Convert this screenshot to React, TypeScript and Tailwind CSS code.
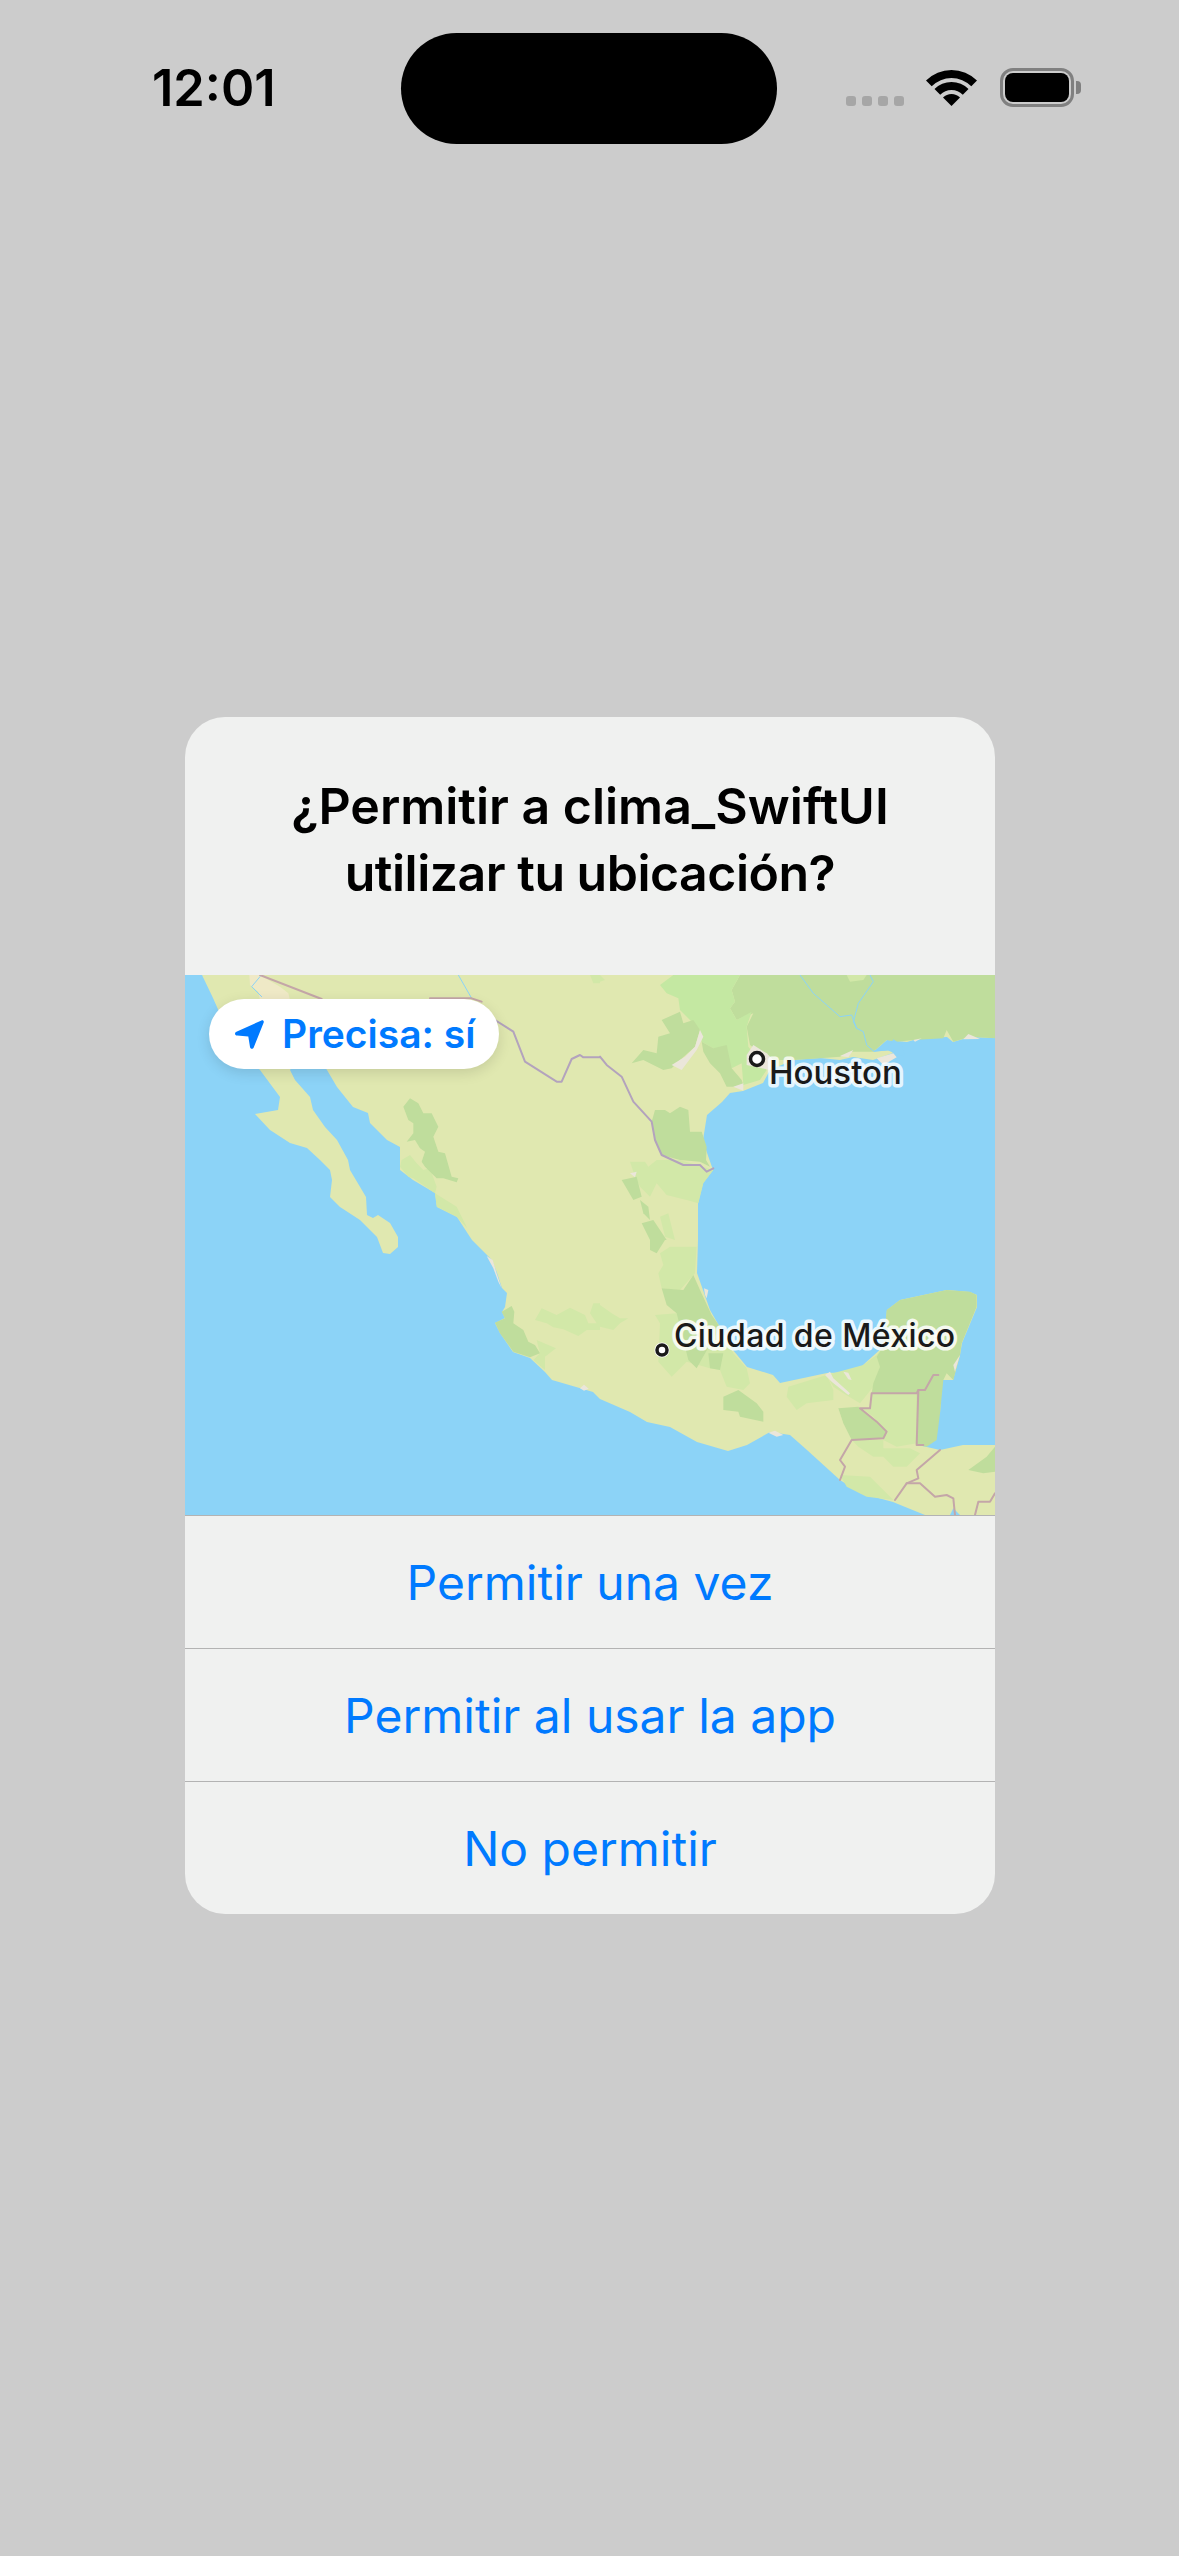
const F = { fontFamily: "Inter, 'Liberation Sans', sans-serif" };

const LAND =
  "17,0 28,23 40,50 60,80 75,95 95,122 93,135 70,139 85,155 105,168 122,173 135,185 145,195 147,205 145,222 155,232 175,245 192,262 198,278 205,279 213,272 213,262 205,248 193,240 188,243 182,240 181,222 165,195 163,185 152,165 140,152 128,135 125,122 110,105 105,95 115,80 135,85 142,95 152,112 168,132 183,138 185,148 202,165 215,172 215,195 228,205 250,218 252,232 272,242 285,262 287,265 307,285 312,298 317,313 322,318 320,332 317,337 320,343 310,348 315,358 328,377 345,383 360,397 367,405 398,414 408,417 415,424 445,437 462,447 485,452 512,467 543,476 562,470 585,457 605,460 622,475 655,505 675,518 708,527 735,538 740,540 810,540 810,470 778,470 755,475 742,472 732,470 755,438 757,405 768,405 775,380 777,368 792,332 792,320 785,317 762,315 715,325 702,335 698,372 678,390 672,397 642,398 595,408 588,400 562,392 548,375 525,335 512,298 513,265 513,228 518,208 528,195 520,172 518,165 522,140 537,127 545,118 558,116 578,108 585,95 608,85 635,83 655,85 668,82 688,85 708,78 705,75 688,77 702,65 722,67 735,63 762,62 768,67 785,62 810,63 810,0";

function Polys({ fill, items }: { fill: string; items: string[] }) {
  return (
    <>
      {items.map((p) => (
        <polygon key={p} points={p} fill={fill} />
      ))}
    </>
  );
}

function Lines({ stroke, width, items }: { stroke: string; width: number; items: string[] }) {
  return (
    <>
      {items.map((p) => (
        <polyline key={p} points={p} fill="none" stroke={stroke} strokeWidth={width} strokeLinejoin="round" strokeLinecap="round" />
      ))}
    </>
  );
}

const MID = "#bfdd9c";
const LIGHT = "#d2e8a8";
const BRIGHT = "#c4e8a2";
const BEIGE = "#ebe6da";
const WATER = "#8cd3f7";
const BORDER = "#c4a6a8";
const PURPLE = "#b3a3bd";

function MapArt() {
  return (
    <svg viewBox="0 0 810 540" className="block w-full h-full">
      <rect width="810" height="540" fill={WATER} />
      <polygon points={LAND} fill="#e0e8b0" />

      <g transform="translate(-5,-5) scale(0.33333)">
        <Polys fill="#efe9c6" items={["208,15 240,15 300,50 325,70 330,90 240,90 235,65 210,45"]} />
        <Polys fill={LIGHT} items={["660,590 665,570 690,555 710,580 730,600 750,595 770,650 765,670 830,710 862,775 830,740 770,710 765,670 700,625 685,620", "1230,15 1260,15 1260,40 1240,40"]} />
        <Polys fill={MID} items={["670,410 690,385 715,400 730,430 755,430 775,470 760,500 775,545 795,550 815,620 835,625 830,637 790,625 770,625 735,590 725,575 735,545 720,535 705,510 680,515 700,490 700,460 685,450"]} />
        <Lines stroke={WATER} width={3} items={["240,20 215,50 245,80", "835,15 875,85"]} />
        <Lines stroke={BORDER} width={6} items={["240,15 425,87", "750,85 875,85 905,95"]} />
        <Lines stroke={PURPLE} width={6} items={["945,150 1000,185 1035,275 1130,335 1145,335 1175,267 1200,255 1210,262 1260,262"]} />
      </g>

      <g transform="translate(415,-5) scale(0.33333)">
        <Polys fill={MID} items={["420,15 1185,15 1185,205 1110,200 1060,215 1040,180 1030,205 940,210 890,215 860,210 820,245 750,245 720,260 660,265 580,270 510,270 450,225 440,170 460,130 410,150 390,115 405,95 395,60"]} />
        <Polys fill={BRIGHT} items={["180,45 220,15 420,15 395,60 405,95 390,115 410,150 455,125 440,170 445,230 500,300 480,330 430,345 425,280 395,295 340,235 305,215 300,180 240,120 235,85 200,70"]} />
        <Polys fill={LIGHT} items={["0,15 15,30 0,35", "90,575 135,575 145,590 170,570 240,570 340,600 310,640 295,700 260,690 200,675 170,640 150,680 120,650 105,620", "180,740 205,730 225,810 195,800", "740,15 800,15 790,30 750,35"]} />
        <Polys fill={MID} items={["95,280 130,240 170,250 175,200 210,190 185,150 240,125 250,160 280,150 300,180 285,230 240,270 215,295 190,300 130,270", "305,215 340,235 380,225 395,295 425,330 430,345 405,350 380,350 360,310 330,280 310,245", "165,420 195,420 210,430 240,410 265,420 270,485 305,485 320,530 318,570 330,590 300,575 240,570 185,555 165,510 155,455", "65,630 110,620 125,680 100,690", "120,690 145,710 150,750 130,730", "125,760 160,750 200,810 150,810"]} />
        <Polys fill={BEIGE} items={["440,255 460,225 500,250 520,270 510,300 440,285", "215,285 255,260 285,230 300,180 310,200 290,240 245,300", "400,350 430,340 430,362", "830,265 880,250 890,262 850,285", "1090,208 1105,192 1140,207", "940,210 965,205 945,215", "720,258 760,240 745,262", "90,610 110,605 105,622"]} />
        <Polys fill={WATER} items={["860,240 880,208 905,225 915,260 885,250"]} />
        <Lines stroke={WATER} width={3} items={["600,15 640,70 720,140 755,135 770,175", "810,15 820,35 775,100 760,155 770,175 790,185 800,225 820,243 862,240"]} />
        <Lines stroke={PURPLE} width={6} items={["0,260 20,285 65,320 100,395 155,455 165,510 185,555 250,585 300,585 320,605 340,595"]} />
      </g>

      <g transform="translate(-5,265) scale(0.33333)">
        <Polys fill={LIGHT} items={["1065,240 1085,205 1130,225 1170,203 1215,225 1225,250 1250,250 1230,220 1240,190 1260,190 1260,270 1220,270 1195,288 1150,268 1120,262 1100,250", "1070,300 1105,315 1128,325 1095,350 1095,390 1060,360 1080,340"]} />
        <Polys fill={MID} items={["945,248 975,235 965,215 995,198 1003,215 1000,250 1030,270 1045,305 1065,315 1080,340 1050,352 1000,335 960,280"]} />
        <Polys fill={BEIGE} items={["1200,445 1212,434 1226,446 1212,452", "920,48 938,60 950,100 965,145 955,125 940,85"]} />
      </g>

      <g transform="translate(415,265) scale(0.33333)">
        <Polys fill={LIGHT} items={["180,40 210,20 290,20 285,100 240,150 185,145 175,100 190,75", "0,195 35,220 60,235 85,235 60,250 40,270 0,260", "165,225 180,250 175,365 215,410 260,365 330,385 360,390 380,440 430,450 450,430 440,385 400,340 360,260 230,220", "565,440 680,405 700,450 700,480 620,490 590,510 560,470", "790,375 830,345 850,320 840,380 820,440 780,490 730,460 700,440 680,405", "815,460 950,460 950,610 890,620 850,600 860,575 820,530 785,505 810,505", "755,600 850,600 850,625 930,625 960,640 920,680 880,680 850,650 820,650 775,620", "720,705 810,710 880,780 800,770 740,740"]} />
        <Polys fill={MID} items={["150,0 195,0 170,40 150,30", "185,145 250,150 280,105 300,150 335,225 360,260 290,385 265,360 230,220 200,195", "325,340 370,340 360,390 330,385", "370,470 415,450 470,490 490,515 490,545 420,530 415,515 370,510", "860,210 900,180 1040,150 1110,155 1130,165 1130,200 1085,310 1080,345 1060,420 1040,400 1030,420 1020,520 1010,600 980,620 950,615 950,460 815,460 820,430 840,380 830,350 850,320", "715,505 775,500 830,545 860,575 850,595 755,600 730,550", "1105,690 1160,650 1185,620 1185,695 1150,700"]} />
        <Polys fill={WATER} items={["1050,825 1060,805 1080,825"]} />
        <Polys fill={BEIGE} items={["675,405 690,395 700,415 750,460 745,465 695,425", "730,395 745,398 755,420 745,418", "1060,375 1080,345 1065,395", "505,578 525,572 550,585 530,590", "312,145 325,150 320,175 315,165"]} />
        <Lines stroke={BORDER} width={6} items={["1015,405 1000,405 975,450 955,450 950,460 815,460 810,505 780,505 830,545 860,575 850,595 755,600 720,660 735,680 720,720", "955,450 950,615 970,615", "1020,630 950,690 955,715 920,730 885,780", "920,730 960,730 1005,770 1040,765 1060,775 1065,825", "1125,825 1135,785 1170,785 1185,760"]} />
      </g>

      <circle cx="572" cy="84" r="6.5" fill="#fff" stroke="#1a1a1a" strokeWidth="3.5" />
      <circle cx="477" cy="375" r="7.5" fill="#fff" />
      <circle cx="477" cy="375" r="5" fill="#fff" stroke="#1a1a1a" strokeWidth="3.5" />
      <text x="584" y="109" fontSize="33" fontWeight="500" fill="#1a1a1a" stroke="#ffffff" strokeOpacity="0.8" strokeWidth="7" strokeLinejoin="round" paintOrder="stroke" fontFamily="Inter, sans-serif">Houston</text>
      <text x="489" y="372" fontSize="32" fontWeight="500" letterSpacing="0.4" fill="#1a1a1a" stroke="#ffffff" strokeOpacity="0.85" strokeWidth="7" strokeLinejoin="round" paintOrder="stroke" fontFamily="Inter, sans-serif">Ciudad de México</text>
    </svg>
  );
}

function Wifi() {
  return (
    <svg viewBox="0 0 51 37" className="w-[51px] h-[37px] mt-[69px] ml-[22px]" fill="#000">
      <path d="M0 11.5 A36 36 0 0 1 51 11.5 L45.3 17.2 A28 28 0 0 0 5.7 17.2 Z" />
      <path d="M8.5 20 A24 24 0 0 1 42.5 20 L36.8 25.7 A16 16 0 0 0 14.2 25.7 Z" />
      <path d="M17 28.5 A12 12 0 0 1 34 28.5 L25.5 37 Z" />
    </svg>
  );
}

function Battery() {
  return (
    <div className="flex items-center mt-[68px] ml-[23px]">
      <div className="w-[74px] h-[39px] rounded-[13px] border-[3px] border-[#808080] p-[2px]">
        <div className="w-full h-full rounded-[8px] bg-black" />
      </div>
      <div className="w-[5px] h-[13px] ml-[2px] rounded-r-[4px] bg-[#808080]" />
    </div>
  );
}

function ActionRow({ label }: { label: string }) {
  return (
    <div className="h-[133px] pt-[2px] border-t border-[#b3b3b3] flex items-center justify-center text-[48px] text-[#007aff] font-normal">
      {label}
    </div>
  );
}

export default function App() {
  return (
    <div className="w-[1179px] h-[2556px] bg-[#cccccc] overflow-hidden" style={F}>
      <div className="h-[144px] flex items-start">
        <div className="ml-[152px] mt-[59px] w-[121px] h-[58px] text-[50.5px] leading-[58px] font-semibold text-black whitespace-nowrap">12:01</div>
        <div className="ml-[128px] mt-[33px] w-[376px] h-[111px] rounded-[56px] bg-black" />
        <div className="ml-[69px] mt-[96px] flex gap-[6px]">
          <div className="w-[10px] h-[10px] rounded-[3px] bg-[#a6a6a6]" />
          <div className="w-[10px] h-[10px] rounded-[3px] bg-[#a6a6a6]" />
          <div className="w-[10px] h-[10px] rounded-[3px] bg-[#a6a6a6]" />
          <div className="w-[10px] h-[10px] rounded-[3px] bg-[#a6a6a6]" />
        </div>
        <Wifi />
        <Battery />
      </div>

      <div className="ml-[185px] mt-[573px] w-[810px] rounded-[40px] overflow-hidden bg-[#f0f1f0]">
        <div className="h-[258px] pt-[56px] text-center text-black text-[50px] leading-[67px] font-semibold">
          <div>¿Permitir a clima_SwiftUI</div>
          <div className="tracking-[-0.5px]">utilizar tu ubicación?</div>
        </div>
        <div className="relative h-[540px]">
          <MapArt />
          <div className="absolute left-[24px] top-[24px] w-[290px] h-[70px] rounded-[35px] bg-white shadow-[0_4px_14px_rgba(0,0,0,0.12)] flex items-center text-[#007aff] text-[39px] font-semibold">
            <svg viewBox="0 0 29 29" className="ml-[26px] w-[29px] h-[29px]" fill="#007aff">
              <path d="M26.5 0.4 C28 -0.1 29.2 1 28.7 2.5 L18.8 27.2 C18 29.3 15.4 29.4 15 27 L13.3 16.6 L2.2 15.6 C-0.3 15.3 -0.7 12.8 1.4 11.8 Z" />
            </svg>
            <span className="ml-[18px] whitespace-nowrap">Precisa: sí</span>
          </div>
        </div>
        <ActionRow label="Permitir una vez" />
        <ActionRow label="Permitir al usar la app" />
        <ActionRow label="No permitir" />
      </div>
    </div>
  );
}
